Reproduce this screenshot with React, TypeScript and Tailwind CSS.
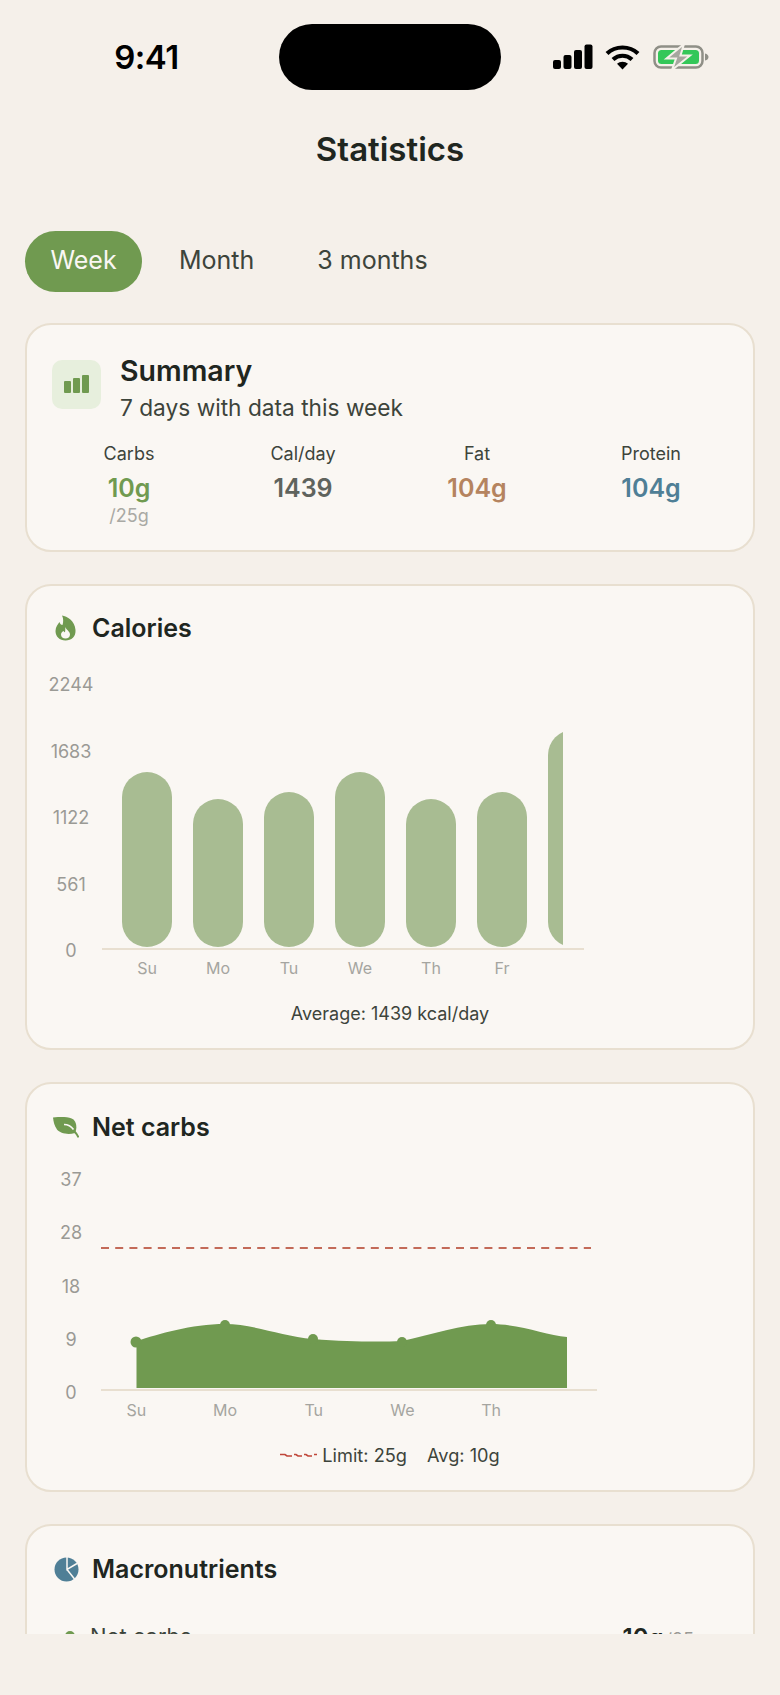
const bars = [
  { day: 'Su', height: 175 },
  { day: 'Mo', height: 148 },
  { day: 'Tu', height: 155 },
  { day: 'We', height: 175 },
  { day: 'Th', height: 148 },
  { day: 'Fr', height: 155 },
  { day: '', height: 217 },
];

const stats = [
  { label: 'Carbs', value: '10g', color: 'text-[#709a50]', sub: '/25g' },
  { label: 'Cal/day', value: '1439', color: 'text-[#5f635d]' },
  { label: 'Fat', value: '104g', color: 'text-[#b5845f]' },
  { label: 'Protein', value: '104g', color: 'text-[#4f7f96]' },
];

function StatusIcons() {
  return (
    <div className="flex items-center pl-[52px]">
      <svg width="40" height="26" viewBox="0 0 40 26" fill="#000">
        <rect x="0" y="16" width="8" height="9" rx="2" />
        <rect x="10.5" y="11" width="8" height="14" rx="2" />
        <rect x="21" y="6" width="8" height="19" rx="2" />
        <rect x="31.5" y="0.5" width="8" height="24.5" rx="2" />
      </svg>
      <svg className="ml-[12px]" width="35" height="26" viewBox="0 0 35 26" fill="none" stroke="#000" strokeWidth="4.2">
        <path d="M2 9.5C10.5 1.5 24.5 1.5 33 9.5" />
        <path d="M8 15.5C13.5 10.5 21.5 10.5 27 15.5" />
        <path d="M17.5 25.5L12 19.8C15 17 20 17 23 19.8Z" fill="#000" stroke="none" />
      </svg>
      <svg className="ml-[13px]" width="56" height="26" viewBox="0 0 56 26">
        <rect x="1.5" y="2.5" width="48" height="21" rx="6.5" fill="none" stroke="#8f8f87" strokeWidth="2.5" />
        <rect x="5" y="6" width="41" height="14" rx="3.5" fill="#34c759" />
        <path d="M52 9.5C54.5 10 55.5 11.5 55.5 13C55.5 14.5 54.5 16 52 16.5Z" fill="#8f8f87" />
        <path d="M31 0L13.5 14.5H23L19 26L37 11.5H27.5Z" fill="#a6a69f" stroke="#f5f0ea" strokeWidth="2" />
      </svg>
    </div>
  );
}

function FlameIcon() {
  return (
    <svg width="21" height="26" viewBox="0 0 21 26">
      <path d="M7 .5C12 1 20 6 20.5 15C21 21.5 16.5 25.5 10.5 25.5C4.5 25.5.5 21.5.5 16C.5 12 3 9 4.5 7C5 9 6 10 7.5 10C8.5 7 8.5 3.5 7 .5Z" fill="#709a50" />
      <path d="M10.5 12C11 15 15 16 15 19.5C15 22 13 23.5 10.5 23.5C8 23.5 6 22 6 19.5C6 17.5 7.5 16.5 8.5 16C9 17 9.5 17.5 10 17C10.5 15.5 10 14 10.5 12Z" fill="#faf7f3" />
    </svg>
  );
}

function LeafIcon() {
  return (
    <svg width="26" height="21" viewBox="0 0 26 21">
      <path d="M0 .5C7-.5 16-.5 20.5 2.5C24 6 24 12 22 16C15 18 7 16.5 4 12.5C1.5 9 .5 5 0 .5Z" fill="#709a50" />
      <path d="M11 7.5C14 7.5 18 9 20.5 12.5" fill="none" stroke="#faf7f3" strokeWidth="1.5" />
      <path d="M21 14C23 16 24.5 18 25.5 20.5" fill="none" stroke="#709a50" strokeWidth="2" />
    </svg>
  );
}

function PieIcon() {
  return (
    <svg width="25" height="25" viewBox="0 0 25 25">
      <circle cx="12.5" cy="12.5" r="12" fill="#4f7f96" />
      <path d="M13 0V12.5L23 6.5M13 12.5L20.5 22" fill="none" stroke="#faf7f3" strokeWidth="1.5" />
    </svg>
  );
}

function CarbsArea() {
  return (
    <svg className="block" width="496" height="72" viewBox="0 0 496 72">
      <path d="M35.5 24C58 17 90 7 124 7C152 7 180 19 212 22C250 25 280 25 301 24C330 18 360 7 390 7C418 7 445 18 466 20V71H35.5Z" fill="#709a50" />
      <circle cx="35" cy="25" r="5.5" fill="#709a50" />
      <circle cx="124" cy="8" r="5" fill="#709a50" />
      <circle cx="212" cy="22" r="5" fill="#709a50" />
      <circle cx="301" cy="25" r="5" fill="#709a50" />
      <circle cx="390" cy="8" r="5" fill="#709a50" />
    </svg>
  );
}

function Card({ children, className }: { children: React.ReactNode; className: string }) {
  return <section className={`rounded-[26px] border-2 border-[#e8dfd0] bg-[#faf7f3] ${className}`}>{children}</section>;
}

function YAxis({ labels, className }: { labels: string[]; className: string }) {
  return (
    <div className={`flex w-[46px] shrink-0 flex-col items-center justify-between text-[18px] leading-[24px] text-[#9a9a95] ${className}`}>
      {labels.map((label) => (
        <span key={label}>{label}</span>
      ))}
    </div>
  );
}

export default function App() {
  return (
    <div className="flex h-[1695px] w-[780px] flex-col bg-[#f5f0ea] font-['Inter',sans-serif]">
      <div className="h-[1634px] overflow-hidden">
        <header className="mt-[24px] flex h-[66px] items-center">
          <div className="w-[279px] pl-[14px] text-center text-[33px] font-semibold leading-none tracking-[-0.5px] text-black">9:41</div>
          <div className="h-[66px] w-[222px] rounded-full bg-black" />
          <StatusIcons />
        </header>

        <h1 className="mt-[38px] text-center text-[33px] font-semibold leading-[42px] text-[#20261f]">Statistics</h1>

        <nav className="mt-[60px] flex h-[61px] items-center px-[25px] pt-[1px] text-[25px] text-[#3d443b]">
          <span className="flex h-[61px] w-[117px] items-center justify-center rounded-full bg-[#709a50] text-[#faf7f3]">Week</span>
          <span className="ml-[37px]">Month</span>
          <span className="ml-[63px]">3 months</span>
        </nav>

        <div className="mx-[25px] mt-[32px] flex flex-col gap-[32px]">
          <Card className="h-[229px] px-[25px] pt-[27px]">
            <div className="flex gap-[19px]">
              <div className="mt-[8px] flex h-[49px] w-[49px] items-end justify-center gap-[2px] rounded-[10px] bg-[#e7efdd] pb-[16px]">
                <div className="h-[12px] w-[7px] rounded-[1px] bg-[#709a50]" />
                <div className="h-[15px] w-[7px] rounded-[1px] bg-[#709a50]" />
                <div className="h-[18px] w-[7px] rounded-[1px] bg-[#709a50]" />
              </div>
              <div>
                <h2 className="text-[28.5px] font-semibold leading-[38px] text-[#20261f]">Summary</h2>
                <p className="mt-[3px] text-[22.7px] leading-[30px] text-[#3d443b]">7 days with data this week</p>
              </div>
            </div>
            <div className="mt-[19px] -ml-[10px] grid w-[696px] grid-cols-4 text-center">
              {stats.map((stat) => (
                <div key={stat.label} className="flex flex-col items-center">
                  <span className="text-[18px] leading-[24px] text-[#3d443b]">{stat.label}</span>
                  <span className={`mt-[4px] text-[25px] font-semibold leading-[36px] ${stat.color}`}>{stat.value}</span>
                  {stat.sub && <span className="-mt-[2px] text-[18px] leading-[24px] text-[#a9a9a4]">{stat.sub}</span>}
                </div>
              ))}
            </div>
          </Card>

          <Card className="h-[466px] px-[21px] pt-[26px]">
            <div className="flex items-center gap-[16px] pl-[7px]">
              <FlameIcon />
              <h2 className="text-[25px] font-semibold leading-[32px] text-[#20261f]">Calories</h2>
            </div>
            <div className="mt-[28px] flex">
              <YAxis labels={['2244', '1683', '1122', '561', '0']} className="mt-[1px] h-[290px]" />
              <div className="ml-[8px] w-[482px]">
                <div className="flex h-[278px] border-b-2 border-[#e8dfd0]">
                  <div className="flex w-[461px] items-end gap-[21px] overflow-hidden pb-[1px] pl-[20px]">
                    {bars.map((bar, i) => (
                      <div key={i} className="w-[50px] shrink-0 rounded-full bg-[#a8bc92]" style={{ height: bar.height }} />
                    ))}
                  </div>
                </div>
                <div className="mt-[6px] flex gap-[21px] pl-[20px] text-[16px] leading-[24px] text-[#a5a5a0]">
                  {bars.slice(0, 6).map((bar) => (
                    <span key={bar.day} className="w-[50px] text-center">{bar.day}</span>
                  ))}
                </div>
              </div>
            </div>
            <p className="mt-[22px] text-center text-[18px] leading-[24px] text-[#3d443b]">Average: 1439 kcal/day</p>
          </Card>

          <Card className="h-[410px] px-[21px] pt-[27px]">
            <div className="flex items-center gap-[13px] pl-[5px]">
              <LeafIcon />
              <h2 className="text-[25px] font-semibold leading-[32px] text-[#20261f]">Net carbs</h2>
            </div>
            <div className="mt-[25px] flex">
              <YAxis labels={['37', '28', '18', '9', '0']} className="h-[237px]" />
              <div className="ml-[7px] w-[496px]">
                <svg className="mt-[79px] block" width="490" height="2" viewBox="0 0 490 2">
                  <line x1="0" y1="1" x2="490" y2="1" stroke="#c36a58" strokeWidth="2" strokeDasharray="8 6.2" />
                </svg>
                <div className="mt-[68px] border-b-2 border-[#e8dfd0]">
                  <CarbsArea />
                </div>
                <div className="mt-[7px] flex text-[16px] leading-[24px] text-[#a5a5a0]">
                  {['Su', 'Mo', 'Tu', 'We', 'Th'].map((day, i) => (
                    <span key={day} className={`w-[88.7px] text-center ${i === 0 ? 'ml-[-9px]' : ''}`}>{day}</span>
                  ))}
                </div>
              </div>
            </div>
            <div className="mt-[21px] flex items-center justify-center text-[18.2px] leading-[24px] text-[#3d443b]">
              <svg width="37" height="6" viewBox="0 0 37 6" fill="none" stroke="#c0473a" strokeWidth="1.6">
                <path d="M0 2.5H5L7 4H12M14 2.5H16L18 4H22M24 2.5H26L28 4H32M34 2.5H37" />
              </svg>
              <span className="ml-[5px]">Limit: 25g</span>
              <span className="ml-[20px]">Avg: 10g</span>
            </div>
          </Card>

          <Card className="h-[300px] px-[27px] pt-[27px]">
            <div className="flex items-center gap-[13px]">
              <PieIcon />
              <h2 className="text-[25px] font-semibold leading-[32px] text-[#20261f]">Macronutrients</h2>
            </div>
            <div className="mt-[37px] flex items-start justify-between pl-[11px] pr-[21px]">
              <div className="flex items-center gap-[15px] text-[22px] leading-[28px] text-[#3d443b]">
                <span className="h-[10px] w-[10px] rounded-full bg-[#709a50]" />
                Net carbs
              </div>
              <div className="mt-[2px] flex items-baseline gap-[2px] text-[24px] font-semibold leading-[28px] text-[#20261f]">
                10g
                <span className="text-[18px] font-normal text-[#9a9a95]">/25g</span>
              </div>
            </div>
          </Card>
        </div>
      </div>
    </div>
  );
}
